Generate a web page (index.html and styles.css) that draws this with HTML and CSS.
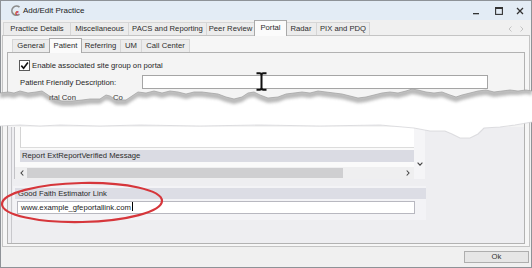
FILE: index.html
```html
<!DOCTYPE html>
<html>
<head>
<meta charset="utf-8">
<title>Add/Edit Practice</title>
<link rel="stylesheet" href="styles.css">
</head>
<body>
<div class="window">
  <div class="titlebar">
    <svg class="appicon" viewBox="0 0 11 11" width="11" height="11">
      <path d="M8.5 2.2 A4.6 4.6 0 1 0 8.5 9.2" fill="none" stroke="#8c8c8c" stroke-width="1.7"/>
      <text x="4.2" y="9.6" class="icon-e">e</text>
    </svg>
    <span class="title">Add/Edit Practice</span>
    <div class="winbtns">
      <svg class="wb wb-min" viewBox="0 0 8 8" width="8" height="8"><rect x="1" y="6" width="6" height="1.3" fill="#333"/></svg>
      <svg class="wb wb-max" viewBox="0 0 8 8" width="8" height="8"><rect x="0.6" y="0.6" width="6.8" height="6.8" fill="none" stroke="#333" stroke-width="1.1"/><rect x="0" y="0" width="8" height="2" fill="#333"/></svg>
      <svg class="wb wb-close" viewBox="0 0 8 8" width="8" height="8"><path d="M1 1 L7 7 M7 1 L1 7" stroke="#333" stroke-width="1.3"/></svg>
    </div>
  </div>

  <div class="tabrow">
    <div class="tabs outer-tabs">
      <div class="tab">Practice Details</div>
      <div class="tab">Miscellaneous</div>
      <div class="tab">PACS and Reporting</div>
      <div class="tab">Peer Review</div>
      <div class="tab active">Portal</div>
      <div class="tab">Radar</div>
      <div class="tab">PIX and PDQ</div>
    </div>
    <div class="tabscroll">
      <svg viewBox="0 0 5 6" width="5" height="6"><path d="M3.5 0.5 L1 3 L3.5 5.5" fill="none" stroke="#c4c4c4" stroke-width="1"/></svg>
      <svg viewBox="0 0 5 6" width="5" height="6"><path d="M1.5 0.5 L4 3 L1.5 5.5" fill="none" stroke="#c4c4c4" stroke-width="1"/></svg>
    </div>
  </div>

  <div class="panel">
    <div class="tabs inner-tabs">
      <div class="tab">General</div>
      <div class="tab active">Patient</div>
      <div class="tab">Referring</div>
      <div class="tab">UM</div>
      <div class="tab">Call Center</div>
    </div>

    <div class="group">
      <div class="check-row">
        <span class="checkbox">
          <svg viewBox="0 0 9 9" width="9" height="9"><path d="M1.3 4.6 L3.6 7.2 L7.9 1.4" fill="none" stroke="#111" stroke-width="1.6"/></svg>
        </span>
        <span>Enable associated site group on portal</span>
      </div>
      <div class="field-row">
        <label class="field-label">Patient Friendly Description:</label>
        <div class="textbox"></div>
      </div>
      <div class="hidden-gap"></div>

      <div class="lower">
        <div class="lower-inner">
          <div class="scroll">
            <div class="scroll-content">
              <div class="listbox"></div>
              <div class="section-head">Report ExtReportVerified Message</div>
            </div>
            <div class="vscroll">
              <svg viewBox="0 0 6 4" width="6" height="4"><path d="M0.6 0.6 L3 3.2 L5.4 0.6" fill="none" stroke="#444" stroke-width="1.1"/></svg>
            </div>
            <div class="hscroll">
              <svg viewBox="0 0 4 6" width="4" height="6"><path d="M3.3 0.5 L1 3 L3.3 5.5" fill="none" stroke="#444" stroke-width="1.1"/></svg>
              <div class="thumb"></div>
              <svg class="hs-right" viewBox="0 0 4 6" width="4" height="6"><path d="M0.7 0.5 L3 3 L0.7 5.5" fill="none" stroke="#444" stroke-width="1.1"/></svg>
            </div>
            <div class="corner"></div>
          </div>

          <div class="gfe">
            <div class="section-head">Good Faith Estimator Link</div>
            <div class="gfe-input">www.example_gfeportallink.com<span class="caret"></span></div>
          </div>
        </div>
      </div>
    </div>
  </div>

  <div class="footer">
    <button class="ok">Ok</button>
  </div>

  <svg class="tear" viewBox="0 86 532 54" width="532" height="54">
    <defs>
      <filter id="soft" x="-5%" y="-50%" width="110%" height="200%"><feGaussianBlur stdDeviation="1.4"/></filter>
      <filter id="soft2" x="-5%" y="-50%" width="110%" height="200%"><feGaussianBlur stdDeviation="0.7"/></filter>
      <clipPath id="paper">
        <path d="M0 93 L8 92 L14 93 L20 91 L28 93 L36 92 L42 91 L48 95 L54 99 L62 101 L72 101 L82 100 L90 99 L100 99 L106 95 L110 96 L116 100 L126 100 L132 96 L138 92 L146 93 L154 91 L162 93 L170 91 L178 92 L186 94 L194 92 L202 92 L210 93 L218 94 L226 97 L234 99 L242 97 L248 93 L254 92 L260 95 L268 98 L278 97 L286 94 L294 93 L302 92 L310 93 L318 91 L326 92 L334 93 L342 94 L350 96 L358 98 L366 97 L374 95 L382 93 L390 92 L398 93 L406 91 L412 89 L418 90 L426 92 L434 93 L442 92 L450 95 L456 97 L462 95 L470 93 L478 91 L486 90 L494 92 L502 91 L510 90 L518 91 L526 90 L532 91 L532 122 L515 125 L500 127 L484 128 L478 134 L470 138 L460 138 L452 134 L445 131 L430 131 L414 128 L380 125 L320 126 L260 125 L200 126 L140 125 L100 126 L60 125 L40 126 L20 125 L0 126 Z"/>
      </clipPath>
    </defs>
    <path class="paper" d="M0 93 L8 92 L14 93 L20 91 L28 93 L36 92 L42 91 L48 95 L54 99 L62 101 L72 101 L82 100 L90 99 L100 99 L106 95 L110 96 L116 100 L126 100 L132 96 L138 92 L146 93 L154 91 L162 93 L170 91 L178 92 L186 94 L194 92 L202 92 L210 93 L218 94 L226 97 L234 99 L242 97 L248 93 L254 92 L260 95 L268 98 L278 97 L286 94 L294 93 L302 92 L310 93 L318 91 L326 92 L334 93 L342 94 L350 96 L358 98 L366 97 L374 95 L382 93 L390 92 L398 93 L406 91 L412 89 L418 90 L426 92 L434 93 L442 92 L450 95 L456 97 L462 95 L470 93 L478 91 L486 90 L494 92 L502 91 L510 90 L518 91 L526 90 L532 91 L532 122 L515 125 L500 127 L484 128 L478 134 L470 138 L460 138 L452 134 L445 131 L430 131 L414 128 L380 125 L320 126 L260 125 L200 126 L140 125 L100 126 L60 125 L40 126 L20 125 L0 126 Z"/>
    <text class="frag" x="49" y="99.5">rtal Con</text>
    <text class="frag" x="113" y="99.5">Co</text>
    <g clip-path="url(#paper)">
      <path class="shadow" filter="url(#soft)" d="M0 92 L8 91 L14 92 L20 90 L28 92 L36 91 L42 90 L48 94 L54 98 L62 100 L72 100 L82 99 L90 98 L100 98 L106 94 L110 95 L116 99 L126 99 L132 95 L138 91 L146 92 L154 90 L162 92 L170 90 L178 91 L186 93 L194 91 L202 91 L210 92 L218 93 L226 96 L234 98 L242 96 L248 92 L254 91 L260 94 L268 97 L278 96 L286 93 L294 92 L302 91 L310 92 L318 90 L326 91 L334 92 L342 93 L350 95 L358 97 L366 96 L374 94 L382 92 L390 91 L398 92 L406 90 L412 88 L418 89 L426 91 L434 92 L442 91 L450 94 L456 96 L462 94 L470 92 L478 90 L486 89 L494 91 L502 90 L510 89 L518 90 L526 89 L532 90 L532 95 L526 94 L518 95 L510 95 L502 96 L494 97 L486 95 L478 96 L470 98 L462 100 L456 102 L450 100 L442 97 L434 98 L426 97 L418 95 L412 94 L406 96 L398 98 L390 97 L382 98 L374 100 L366 102 L358 103 L350 101 L342 99 L334 98 L326 97 L318 96 L310 98 L302 97 L294 98 L286 99 L278 102 L268 103 L260 100 L254 97 L248 98 L242 102 L234 104 L226 102 L218 99 L210 98 L202 97 L194 97 L186 99 L178 97 L170 96 L162 98 L154 96 L146 98 L138 97 L132 101 L126 105 L116 105 L110 101 L106 100 L100 104 L90 104 L82 105 L72 106 L62 106 L54 104 L48 100 L42 96 L36 97 L28 98 L20 96 L14 98 L8 97 L0 98 Z"/>
    </g>
    <path class="edge" d="M0 93 L8 92 L14 93 L20 91 L28 93 L36 92 L42 91 L48 95 L54 99 L62 101 L72 101 L82 100 L90 99 L100 99 L106 95 L110 96 L116 100 L126 100 L132 96 L138 92 L146 93 L154 91 L162 93 L170 91 L178 92 L186 94 L194 92 L202 92 L210 93 L218 94 L226 97 L234 99 L242 97 L248 93 L254 92 L260 95 L268 98 L278 97 L286 94 L294 93 L302 92 L310 93 L318 91 L326 92 L334 93 L342 94 L350 96 L358 98 L366 97 L374 95 L382 93 L390 92 L398 93 L406 91 L412 89 L418 90 L426 92 L434 93 L442 92 L450 95 L456 97 L462 95 L470 93 L478 91 L486 90 L494 92 L502 91 L510 90 L518 91 L526 90 L532 91"/>
    <path class="edge-low" filter="url(#soft2)" d="M0 126 L20 125 L40 126 L60 125 L100 126 L140 125 L200 126 L260 125 L320 126 L380 125 L414 128 L430 131 L445 131 L452 134 L460 138 L470 138 L478 134 L484 128 L500 127 L515 125 L532 122"/>
  </svg>

  <svg class="ibeam" viewBox="0 0 11 19" width="11" height="19">
    <path d="M0.5 1.2 H3.6 Q5.5 1.2 5.5 3.2 V15.8 Q5.5 17.8 3.6 17.8 H0.5 M10.5 1.2 H7.4 Q5.5 1.2 5.5 3.2 M10.5 17.8 H7.4 Q5.5 17.8 5.5 15.8" fill="none" stroke="#111" stroke-width="2"/>
  </svg>

  <svg class="callout" viewBox="0 180 170 46" width="170" height="46">
    <ellipse cx="82" cy="202.5" rx="80" ry="19.5" fill="none" stroke="#d6363b" stroke-width="2.2" transform="rotate(-1.2 82 202.5)"/>
  </svg>
</div>
</body>
</html>
```

FILE: styles.css
```css
* { box-sizing: border-box; }

html, body {
  margin: 0;
  padding: 0;
  background: #ffffff;
}

body {
  width: 532px;
  height: 268px;
  overflow: hidden;
  font-family: "Liberation Sans", Arial, sans-serif;
  font-size: 7.7px;
  color: #262626;
}

.window {
  position: relative;
  width: 532px;
  height: 268px;
  border: 1px solid #8e9297;
  background: #f0f0f0;
  display: flex;
  flex-direction: column;
}

/* ---------- title bar ---------- */
.titlebar {
  flex: none;
  height: 19px;
  background: #e3ecf5;
  display: flex;
  align-items: center;
  padding: 0 7px 0 10px;
}

.appicon { flex: none; }

.icon-e {
  font-family: "Liberation Serif", serif;
  font-style: italic;
  font-weight: bold;
  font-size: 8px;
  fill: #c8262c;
}

.title {
  font-size: 8px;
  margin-left: 1px;
  color: #222;
}

.winbtns {
  margin-left: auto;
  display: flex;
  align-items: center;
}

.wb { display: block; }
.wb-max { margin-left: 15px; }
.wb-close { margin-left: 13px; }

/* ---------- tabs ---------- */
.tabrow {
  flex: none;
  height: 15px;
  display: flex;
  align-items: flex-end;
  padding: 0 7px 0 2px;
}

.tabs {
  display: grid;
  align-items: end;
}

.outer-tabs {
  grid-template-columns: 68px 58px 78px 48px 31px 31px 53px;
}

.tab {
  height: 13px;
  line-height: 12px;
  text-align: center;
  white-space: nowrap;
  background: #ececec;
  border: 1px solid #d6d6d6;
  border-bottom: none;
  border-left: none;
  color: #2c2c2c;
}

.tab:first-child { border-left: 1px solid #d6d6d6; }

.tab.active {
  position: relative;
  z-index: 2;
  height: 16px;
  line-height: 14px;
  margin: 0 -1px -1px -1px;
  background: #fbfbfb;
  border: 1px solid #a9a9a9;
  border-bottom: none;
}

.tabscroll {
  margin-left: auto;
  align-self: center;
  display: flex;
  gap: 6px;
  padding-top: 2px;
}

.tabscroll svg { display: block; }

/* ---------- outer panel ---------- */
.panel {
  flex: 1;
  margin: 0 1px;
  border: 1px solid #c4c4c4;
  background: #f6f6f6;
  display: flex;
  flex-direction: column;
  min-height: 0;
}

.inner-tabs {
  flex: none;
  height: 16px;
  padding-left: 9px;
  grid-template-columns: 38px 31px 40px 21px 48px;
}

.inner-tabs .tab.active {
  height: 15px;
}

/* ---------- group box ---------- */
.group {
  flex: 1;
  margin: 0 4px 2px 4px;
  border: 1px solid #b2b2b2;
  background: #f4f4f4;
  display: flex;
  flex-direction: column;
  min-height: 0;
}

.check-row {
  flex: none;
  margin: 7px 0 0 11px;
  height: 11px;
  display: flex;
  align-items: center;
  gap: 2px;
}

.checkbox {
  width: 11px;
  height: 11px;
  border: 1px solid #5a5a5a;
  background: #fff;
  display: flex;
  align-items: center;
  justify-content: center;
}

.checkbox svg { display: block; }

.field-row {
  flex: none;
  margin-top: 4px;
  padding-left: 12px;
  height: 14px;
  display: grid;
  grid-template-columns: 122px 346px;
  align-items: center;
}

.textbox {
  height: 14px;
  background: #fff;
  border: 1px solid #a5a5a5;
}

.hidden-gap {
  flex: none;
  height: 38px;
}

/* ---------- lower piece ---------- */
.lower {
  flex: 1;
  background: #eeeef1;
  padding-left: 3px;
  display: flex;
}

.lower-inner {
  flex: 1;
  border-left: 1px solid #c8c8cc;
  display: flex;
  flex-direction: column;
}

.scroll {
  margin-left: 2px;
  width: 411px;
  height: 52px;
  border-left: 1px solid #c2c2c6;
  display: grid;
  grid-template-columns: 1fr 11px;
  grid-template-rows: 40px 12px;
}

.scroll-content {
  background: #fafafa;
  padding-left: 5px;
}

.listbox {
  height: 21px;
  background: #fff;
  border-left: 1px solid #d4d4d4;
  border-bottom: 1px solid #dcdcdc;
}

.section-head {
  height: 12px;
  line-height: 12px;
  background: #dadbe3;
  padding-left: 2px;
  color: #2a2a2a;
  white-space: nowrap;
}

.scroll-content .section-head { margin-top: 2px; }

.vscroll {
  background: #f5f5f7;
  display: flex;
  align-items: flex-end;
  justify-content: center;
  padding-bottom: 1px;
}

.vscroll svg, .hscroll svg { display: block; }

.hscroll {
  background: #efeff0;
  display: flex;
  align-items: center;
  padding: 0 4px 0 5px;
}

.thumb {
  margin-left: 3px;
  width: 316px;
  height: 10px;
  background: #cfcfd1;
}

.hs-right { margin-left: auto; }

.corner { background: #f5f5f7; }

.gfe {
  margin: 7px 0 0 1px;
  width: 413px;
  background: #f3f3f6;
  padding: 2px 0 6px 2px;
}

.gfe .section-head {
  height: 11px;
  line-height: 11px;
  padding-left: 3px;
  background: #dcdde5;
}

.gfe-input {
  margin: 2px 0 0 2px;
  width: 398px;
  height: 13px;
  line-height: 11px;
  background: #fff;
  border: 1px solid #b8b8c0;
  padding-left: 3px;
  color: #222;
  white-space: nowrap;
}

.caret {
  display: inline-block;
  width: 1px;
  height: 9px;
  margin-left: 1px;
  background: #000;
  vertical-align: -1px;
}

/* ---------- footer ---------- */
.footer {
  flex: none;
  height: 20px;
  display: flex;
  justify-content: flex-end;
  align-items: center;
  padding-right: 2px;
}

.ok {
  width: 65px;
  height: 12px;
  padding: 0;
  font-family: "Liberation Sans", Arial, sans-serif;
  font-size: 7.7px;
  line-height: 10px;
  color: #333;
  background: #e6e6e6;
  border: 1px solid #aeaeae;
  border-radius: 0;
}

/* ---------- overlays ---------- */
.tear {
  position: absolute;
  left: -1px;
  top: 85px;
  display: block;
  z-index: 5;
}

.paper { fill: #ffffff; }

.shadow {
  fill: #8a8a8a;
  opacity: 0.6;
}

.edge {
  fill: none;
  stroke: #9a9a9a;
  stroke-width: 0.7;
}

.edge-low {
  fill: none;
  stroke: #d2d2d6;
  stroke-width: 1.2;
  opacity: 0.7;
}

.frag {
  font-family: "Liberation Sans", Arial, sans-serif;
  font-size: 7.7px;
  fill: #333;
}

.ibeam {
  position: absolute;
  left: 255px;
  top: 71px;
  display: block;
  z-index: 6;
}

.callout {
  position: absolute;
  left: -1px;
  top: 179px;
  display: block;
  z-index: 6;
}
```
